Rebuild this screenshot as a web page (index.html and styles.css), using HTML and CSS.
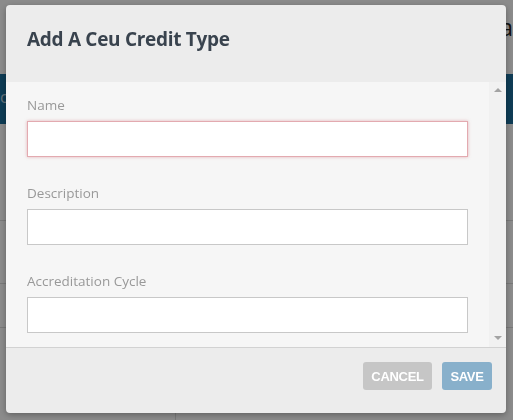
FILE: index.html
```html
<!DOCTYPE html>
<html lang="en">
<head>
  <meta charset="UTF-8" />
  <meta name="viewport" content="width=device-width, initial-scale=1.0"/>
  <title>Ceu Credit Types</title>
  <link rel="stylesheet" href="styles.css">
</head>
<body>

  <div class="page">
    <div class="page-head">
      <h2 class="page-title">Ceu Credit Data</h2>
    </div>
    <div class="page-nav"><span class="nav-link">c</span></div>
    <div class="page-table">
      <div class="row row-head"></div>
      <div class="row row-1"></div>
      <div class="row row-2"></div>
      <div class="row row-3"></div>
    </div>
  </div>

  <div class="backdrop">
    <div class="modal">
      <div class="modal-header">
        <h3 class="modal-title">Add A Ceu Credit Type</h3>
      </div>

      <div class="modal-body">
        <div class="body-content">
          <div class="field">
            <label for="name">Name</label>
            <input type="text" id="name" class="invalid" />
          </div>
          <div class="field">
            <label for="description">Description</label>
            <input type="text" id="description" />
          </div>
          <div class="field">
            <label for="cycle">Accreditation Cycle</label>
            <input type="text" id="cycle" />
          </div>
        </div>
        <div class="scrollbar">
          <span class="arrow arrow-up"></span>
          <span class="arrow arrow-down"></span>
        </div>
      </div>

      <div class="modal-footer">
        <button class="btn btn-cancel">CANCEL</button>
        <button class="btn btn-save">SAVE</button>
      </div>
    </div>
  </div>

</body>
</html>
```

FILE: styles.css
```css
* {
  box-sizing: border-box;
}

html, body {
  height: 100%;
}

body {
  margin: 0;
  font-family: 'Open Sans', 'Segoe UI', sans-serif;
  background: #fff;
  overflow: hidden;
}

/* page behind the dialog */
.page-head {
  height: 74px;
  display: flex;
  justify-content: flex-end;
  align-items: flex-start;
  padding-top: 12px;
}

.page-title {
  margin: 0;
  font-size: 24px;
  line-height: 30px;
  font-weight: 400;
  color: #222;
}

.page-nav {
  height: 50px;
  background: #1a6e9c;
  display: flex;
  align-items: center;
}

.nav-link {
  color: #b9d2e0;
  font-size: 16px;
  margin-top: -4px;
}

.page-table {
  padding-top: 96px;
}

.row {
  border-top: 1px solid #ddd;
}

.row-head { height: 63px; }
.row-1 { height: 44px; }
.row-2 { height: 35px; }
.row-3 { height: 60px; border-left: 1px solid #ddd; margin-left: 175px; border-top: none; }

/* dialog */
.backdrop {
  position: fixed;
  inset: 0;
  background: rgba(0, 0, 0, 0.455);
}

.modal {
  width: 500px;
  margin: 5px 0 0 6px;
  border-radius: 4px;
  overflow: hidden;
  box-shadow: 0 2px 6px rgba(0, 0, 0, 0.3);
  background: #ececec;
}

.modal-header {
  height: 77px;
  padding: 22px 21px 0;
}

.modal-title {
  margin: 0;
  font-size: 19px;
  line-height: 24px;
  font-weight: 700;
  letter-spacing: -0.3px;
  color: #39434e;
}

.modal-body {
  height: 266px;
  display: flex;
  background: #f6f6f6;
  border-bottom: 1px solid #d2d2d2;
}

.body-content {
  flex: 1;
  padding: 13px 21px 0;
}

.scrollbar {
  width: 17px;
  background: #f1f1f1;
  display: flex;
  flex-direction: column;
  justify-content: space-between;
  align-items: center;
  padding: 6px 0 7px;
}

.arrow {
  width: 0;
  height: 0;
  border-left: 4px solid transparent;
  border-right: 4px solid transparent;
}

.arrow-up {
  border-bottom: 4px solid #a3a3a3;
}

.arrow-down {
  border-top: 4px solid #a3a3a3;
}

.field {
  margin-bottom: 26px;
}

.field label {
  display: block;
  font-size: 13.5px;
  line-height: 20px;
  color: #999;
  margin-bottom: 6px;
}

.field input {
  display: block;
  width: 100%;
  height: 36px;
  border: 1px solid #c8c8c8;
  background: #fff;
  outline: none;
}

.field input.invalid {
  border-color: #e3aab0;
  box-shadow: 0 0 3px rgba(214, 120, 130, 0.55);
}

.modal-footer {
  height: 65px;
  display: flex;
  justify-content: flex-end;
  align-items: flex-start;
  gap: 10px;
  padding: 14px 14px 0;
}

.btn {
  height: 28px;
  padding: 0 8px;
  border: none;
  border-radius: 3px;
  color: #fff;
  font-family: 'Liberation Sans', Arial, sans-serif;
  font-size: 13px;
  font-weight: 700;
  letter-spacing: -0.3px;
}

.btn-cancel {
  background: #c6c6c6;
  width: 69px;
}

.btn-save {
  background: #88b0cb;
  width: 50px;
}
```
